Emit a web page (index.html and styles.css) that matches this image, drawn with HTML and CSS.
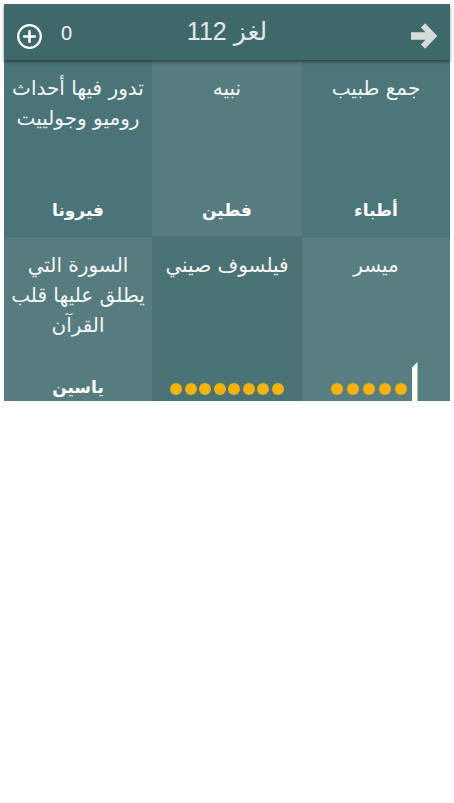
FILE: index.html
```html
<!DOCTYPE html>
<html lang="ar">
<head>
<meta charset="utf-8">
<title>لغز 112</title>
<link rel="stylesheet" href="styles.css">
</head>
<body>
<div class="app">
  <header class="topbar">
    <div class="score">
      <svg class="plus" width="25" height="25" viewBox="0 0 25 25"><circle cx="12.5" cy="12.5" r="11.3" fill="none" stroke="#fff" stroke-width="2.2"/><path d="M12.5 7.2v10.6M7.2 12.5h10.6" stroke="#fff" stroke-width="2.6" stroke-linecap="round"/></svg>
      <span class="count">0</span>
    </div>
    <h1 class="title">لغز 112</h1>
    <div class="next">
      <svg width="27" height="26" viewBox="0 0 27 26"><path d="M1 9.2h14.5l-4.6-4.6 4.3-4.3 12 12.7-12 12.7-4.3-4.3 4.6-4.6H1z" fill="#d6dcdc"/></svg>
    </div>
  </header>
  <main class="board">
    <div class="cell dark1">
      <p class="q">جمع طبيب</p>
      <p class="a">أطباء</p>
    </div>
    <div class="cell light1">
      <p class="q">نبيه</p>
      <p class="a">فطين</p>
    </div>
    <div class="cell dark0">
      <p class="q">تدور فيها أحداث روميو وجولييت</p>
      <p class="a">فيرونا</p>
    </div>
    <div class="cell light2">
      <p class="q">ميسر</p>
      <div class="a dots wide">
        <span class="bar"></span>
        <span class="dot"></span><span class="dot"></span><span class="dot"></span><span class="dot"></span><span class="dot"></span>
      </div>
    </div>
    <div class="cell dark2">
      <p class="q">فيلسوف صيني</p>
      <div class="a dots">
        <span class="dot"></span><span class="dot"></span><span class="dot"></span><span class="dot"></span><span class="dot"></span><span class="dot"></span><span class="dot"></span><span class="dot"></span>
      </div>
    </div>
    <div class="cell light3">
      <p class="q">السورة التي يطلق عليها قلب القرآن</p>
      <p class="a">ياسين</p>
    </div>
  </main>
</div>
</body>
</html>
```

FILE: styles.css
```css
html, body {
  margin: 0;
  padding: 0;
  background: #ffffff;
}

.app {
  width: 446px;
  margin: 4px 4px 0;
  font-family: "DejaVu Sans", "Liberation Sans", sans-serif;
}

.topbar {
  position: relative;
  z-index: 2;
  height: 56px;
  box-sizing: border-box;
  padding: 8px 13px 0;
  display: grid;
  grid-template-columns: 1fr auto 1fr;
  align-items: center;
  background: #3e6869;
  box-shadow: 0 2px 3px rgba(0, 0, 0, 0.45);
}

.score {
  display: flex;
  align-items: center;
  gap: 19px;
  justify-self: start;
}

.plus {
  display: block;
}

.count {
  font-family: "Liberation Sans", sans-serif;
  font-size: 20px;
  color: #f2f4f4;
  margin-bottom: 5px;
}

.title {
  margin: 0 0 10px;
  font-family: "Liberation Sans", "DejaVu Sans", sans-serif;
  font-weight: normal;
  font-size: 25px;
  color: #e4e8e8;
  direction: rtl;
}

.next {
  justify-self: end;
  display: flex;
}

.next svg {
  display: block;
}

.board {
  direction: rtl;
  height: 341px;
  overflow: hidden;
  display: grid;
  grid-template-columns: 148px 150px 148px;
  grid-template-rows: 177px 177px;
}

.cell {
  display: flex;
  flex-direction: column;
  justify-content: space-between;
  box-sizing: border-box;
  padding: 13px 3px 15px;
  text-align: center;
  color: #f3f6f6;
  box-shadow: inset 0 -1px 0 rgba(0, 0, 0, 0.06);
}

.dark0 { background: #4a7477; }
.light1 { background: #567c7f; }
.dark1 { background: #4c7679; }
.light2 { background: #587e81; }
.dark2 { background: #4b7275; }
.light3 { background: #567c7f; }

.q {
  margin: 0;
  font-size: 20px;
  line-height: 30px;
}

.a {
  margin: 0;
  height: 24px;
  font-size: 17px;
  line-height: 24px;
  font-weight: bold;
  color: #ffffff;
}

.dots {
  display: flex;
  justify-content: center;
  align-items: center;
  gap: 2.5px;
  padding-top: 4px;
  box-sizing: border-box;
}

.dots.wide {
  gap: 4px;
  padding-right: 4px;
}

.dot {
  width: 12px;
  height: 12px;
  border-radius: 50%;
  background: #f4b30c;
  flex: none;
}

.bar {
  width: 6px;
  height: 54px;
  margin-left: 1px;
  background: #ffffff;
  clip-path: polygon(0 6px, 100% 0, 100% 100%, 0 100%);
  flex: none;
}
```
